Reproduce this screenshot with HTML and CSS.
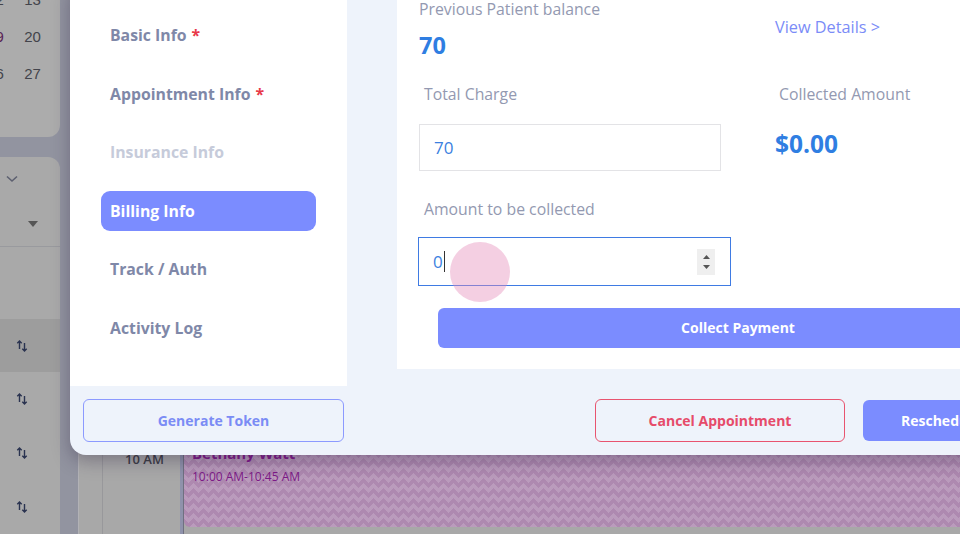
FILE: index.html
```html
<!DOCTYPE html>
<html lang="en">
<head>
<meta charset="utf-8">
<title>Appointment - Billing Info</title>
<link rel="stylesheet" href="styles.css">
</head>
<body>
<div class="page">
  <aside class="sidebar">
    <div class="mini-cal">
      <div class="cal-row"><span class="day">12</span><span class="day">13</span></div>
      <div class="cal-row"><span class="day day-mark">19</span><span class="day">20</span></div>
      <div class="cal-row"><span class="day">26</span><span class="day">27</span></div>
    </div>
    <div class="side-panel">
      <div class="side-head">
        <svg class="chev" width="12" height="8" viewBox="0 0 12 8"><path d="M1 1.5 L6 6 L11 1.5" fill="none" stroke="#5d6070" stroke-width="1.6"/></svg>
      </div>
      <div class="side-select">
        <svg class="caret" width="10" height="6" viewBox="0 0 10 6"><path d="M0 0 H10 L5 6 Z" fill="#555"/></svg>
      </div>
      <div class="side-row"></div>
      <div class="side-row side-row-sel"><svg class="sort" width="12" height="14" viewBox="0 0 12 14"><path d="M3.5 10 V2 M1.3 4.2 L3.5 2 L5.7 4.2 M8.5 4 V12 M6.3 9.8 L8.5 12 L10.7 9.8" fill="none" stroke="#2a3350" stroke-width="1.4"/></svg></div>
      <div class="side-row"><svg class="sort" width="12" height="14" viewBox="0 0 12 14"><path d="M3.5 10 V2 M1.3 4.2 L3.5 2 L5.7 4.2 M8.5 4 V12 M6.3 9.8 L8.5 12 L10.7 9.8" fill="none" stroke="#2a3350" stroke-width="1.4"/></svg></div>
      <div class="side-row"><svg class="sort" width="12" height="14" viewBox="0 0 12 14"><path d="M3.5 10 V2 M1.3 4.2 L3.5 2 L5.7 4.2 M8.5 4 V12 M6.3 9.8 L8.5 12 L10.7 9.8" fill="none" stroke="#2a3350" stroke-width="1.4"/></svg></div>
      <div class="side-row"><svg class="sort" width="12" height="14" viewBox="0 0 12 14"><path d="M3.5 10 V2 M1.3 4.2 L3.5 2 L5.7 4.2 M8.5 4 V12 M6.3 9.8 L8.5 12 L10.7 9.8" fill="none" stroke="#2a3350" stroke-width="1.4"/></svg></div>
    </div>
  </aside>
  <main class="calendar">
    <div class="cal-col cal-col-a"></div>
    <div class="cal-col cal-col-time"><span class="time-label">10 AM</span></div>
    <div class="cal-col cal-col-bar"></div>
    <div class="cal-col cal-col-events">
      <div class="event">
        <div class="event-name">Bethany Watt</div>
        <div class="event-time">10:00 AM-10:45 AM</div>
      </div>
    </div>
  </main>
</div>

<div class="modal">
  <div class="modal-body">
    <nav class="tabs">
      <div class="tab">Basic Info <span class="req">*</span></div>
      <div class="tab">Appointment Info <span class="req">*</span></div>
      <div class="tab tab-disabled">Insurance Info</div>
      <div class="tab tab-active">Billing Info</div>
      <div class="tab">Track / Auth</div>
      <div class="tab">Activity Log</div>
    </nav>
    <section class="billing">
      <div class="row row-balance">
        <div class="col-left">
          <div class="label label-flush">Previous Patient balance</div>
          <div class="big-value">70</div>
        </div>
        <div class="col-right">
          <a class="link">View Details &gt;</a>
        </div>
      </div>
      <div class="row row-labels">
        <div class="label">Total Charge</div>
        <div class="label label-right">Collected Amount</div>
      </div>
      <div class="row row-charge">
        <div class="field field-plain"><span class="field-value">70</span></div>
        <div class="big-value amount">$0.00</div>
      </div>
      <div class="label label-collect">Amount to be collected</div>
      <div class="field field-focus">
        <span class="field-value">0</span><span class="text-caret"></span>
        <span class="spinner">
          <svg width="7" height="4" viewBox="0 0 7 4"><path d="M0 4 L3.5 0 L7 4 Z" fill="#555"/></svg>
          <svg width="7" height="4" viewBox="0 0 7 4"><path d="M0 0 H7 L3.5 4 Z" fill="#555"/></svg>
        </span>
      </div>
      <button class="btn btn-primary btn-collect">Collect Payment</button>
    </section>
  </div>
  <footer class="modal-footer">
    <button class="btn btn-outline-blue btn-token">Generate Token</button>
    <button class="btn btn-outline-red btn-cancel">Cancel Appointment</button>
    <button class="btn btn-primary btn-resched">Reschedule</button>
  </footer>
</div>

<div class="click-dot"></div>
</body>
</html>
```

FILE: styles.css
```css
* { box-sizing: border-box; }

html, body {
  margin: 0;
  padding: 0;
  width: 960px;
  height: 534px;
  overflow: hidden;
  font-family: "Open Sans", "Noto Sans", sans-serif;
}

body { position: relative; background: #8f9199; }

/* ---------- background page (dimmed) ---------- */
.page {
  display: flex;
  height: 534px;
  gap: 18px;
  background: #9294a0;
}

.sidebar {
  width: 60px;
  flex: none;
  display: flex;
  flex-direction: column;
  gap: 20px;
}

.mini-cal {
  height: 137px;
  background: #acacac;
  border-bottom-right-radius: 12px;
  overflow: hidden;
  padding-right: 9px;
}

.cal-row {
  display: flex;
  justify-content: flex-end;
  height: 37px;
  align-items: center;
}
.cal-row:first-child { margin-top: -19px; }

.day {
  flex: none;
  width: 37px;
  text-align: center;
  font-family: "Liberation Sans", sans-serif;
  font-size: 15px;
  color: #43444b;
}
.day-mark { color: #5a2456; }

.side-panel {
  flex: 1;
  background: #a9a9a9;
  border-top-right-radius: 12px;
  display: flex;
  flex-direction: column;
  overflow: hidden;
}

.side-head {
  height: 57px;
  display: flex;
  align-items: center;
  padding-left: 6px;
}

.side-select {
  height: 58px;
  display: flex;
  align-items: center;
  justify-content: flex-end;
  padding-right: 22px;
  border-bottom: 1px solid #999a9e;
}

.side-row {
  height: 54px;
  flex: none;
  display: flex;
  align-items: center;
  padding-left: 16px;
}
.side-row:nth-child(3) { height: 72px; }
.side-row-sel { background: #9d9d9d; height: 53px; }

.calendar {
  flex: 1;
  display: grid;
  grid-template-columns: 25px 77px 4px 1fr;
  grid-template-rows: 1fr;
  background: #a8a8a8;
}

.cal-col { display: flex; flex-direction: column; }
.cal-col-a { border-right: 1px solid #98989b; border-left: 1px solid #b2b2b6; }
.cal-col-time {
  align-items: center;
  padding-top: 450px;
  padding-left: 6px;
}
.time-label {
  font-size: 13px;
  font-weight: 600;
  line-height: 18px;
  color: #3c3d45;
}
.cal-col-bar { background: #8f92ab; border-right: 1px solid #6f7080; }

.cal-col-events { padding-top: 438px; padding-bottom: 7px; }

.event {
  flex: 1;
  border-bottom-left-radius: 6px;
  padding: 6px 8px;
  background-color: #ae89b0;
  background-image:
    linear-gradient(135deg, rgba(210,190,210,.35) 25%, transparent 25%),
    linear-gradient(225deg, rgba(210,190,210,.35) 25%, transparent 25%),
    linear-gradient(315deg, rgba(210,190,210,.35) 25%, transparent 25%),
    linear-gradient(45deg, rgba(210,190,210,.35) 25%, transparent 25%);
  background-position: -5px 0, -5px 0, 0 0, 0 0;
  background-size: 10px 10px;
}
.event-name {
  font-size: 15px;
  font-weight: 700;
  line-height: 18px;
  color: #80198a;
}
.event-time {
  margin-top: 8px;
  font-size: 12px;
  line-height: 14px;
  color: #7d1a87;
}

/* ---------- modal ---------- */
.modal {
  position: absolute;
  left: 70px;
  top: -20px;
  width: 1000px;
  background: #eef3fb;
  border-radius: 16px;
  box-shadow: 0 6px 18px rgba(40, 30, 60, 0.35);
}

.modal-body {
  display: flex;
  align-items: flex-start;
  gap: 50px;
}

.tabs {
  width: 277px;
  flex: none;
  background: #fff;
  padding: 35px 0 38.5px 31px;
  display: flex;
  flex-direction: column;
  gap: 18.5px;
}

.tab {
  height: 40px;
  width: 215px;
  display: flex;
  align-items: center;
  padding-left: 9px;
  border-radius: 9px;
  font-size: 15.8px;
  font-weight: 700;
  color: #7f88a8;
}
.req { color: #e8394a; margin-left: 5px; }
.tab-disabled { color: #c6cbda; }
.tab-active { background: #7b8cff; color: #fff; }

.billing {
  flex: 1;
  background: #fff;
  padding: 19px 0 21px 22px;
}

.row { display: grid; grid-template-columns: 356px 1fr; }

.label {
  font-size: 15.8px;
  line-height: 20px;
  color: #9399b1;
}
.label-flush { margin-top: 0; }

.big-value {
  font-size: 23.5px;
  line-height: 28px;
  font-weight: 700;
  color: #2f7ee2;
}
.row-balance .big-value { margin-top: 12px; }

.col-right { padding-top: 17px; }
.link {
  font-size: 16.3px;
  line-height: 20px;
  color: #7b8cf7;
}

.row-labels { margin-top: 25px; }
.row-labels .label { padding-left: 5px; }
.row-labels .label-right { padding-left: 4px; }

.row-charge { margin-top: 20px; align-items: center; }
.amount { margin-bottom: 7px; font-size: 24.5px; }

.field {
  display: flex;
  align-items: center;
  background: #fff;
  padding-left: 14px;
}
.field-plain {
  width: 302px;
  height: 47px;
  border: 1px solid #e3e3e6;
}
.field-value {
  font-size: 17px;
  color: #3b7fe0;
}

.label-collect { margin-top: 28px; padding-left: 5px; }

.field-focus {
  margin-top: 18px;
  margin-left: -1px;
  width: 313px;
  height: 49px;
  border: 1.5px solid #3f7be3;
}
.text-caret {
  width: 1px;
  height: 21px;
  background: #333;
  margin-left: 1px;
}
.spinner {
  margin-left: auto;
  margin-right: 15px;
  width: 18px;
  height: 26px;
  background: #efefef;
  display: flex;
  flex-direction: column;
  align-items: center;
  justify-content: center;
  gap: 6px;
}
.spinner svg { display: block; }

.btn {
  font-family: inherit;
  font-size: 14px;
  font-weight: 700;
  border-radius: 6px;
  padding-bottom: 2px;
  cursor: pointer;
}
.btn-primary { background: #7b8cff; color: #fff; border: none; }
.btn-collect {
  display: block;
  margin-top: 22px;
  margin-left: 19px;
  width: 600px;
  height: 40px;
}

.modal-footer {
  display: flex;
  align-items: center;
  gap: 18px;
  padding: 13px 0 13px 13px;
}
.btn-outline-blue {
  background: transparent;
  border: 1px solid #8c9aff;
  color: #7b8cf5;
}
.btn-outline-red {
  background: transparent;
  border: 1px solid #e8546f;
  color: #e64b6a;
}
.btn-token { width: 261px; height: 43px; }
.btn-cancel { width: 250px; height: 43px; margin-left: 233px; }
.btn-resched { width: 200px; height: 41px; text-align: left; padding-left: 38px; }

/* click indicator */
.click-dot {
  position: absolute;
  left: 450px;
  top: 242px;
  width: 60px;
  height: 60px;
  border-radius: 50%;
  background: rgba(228, 140, 186, 0.42);
}
```
